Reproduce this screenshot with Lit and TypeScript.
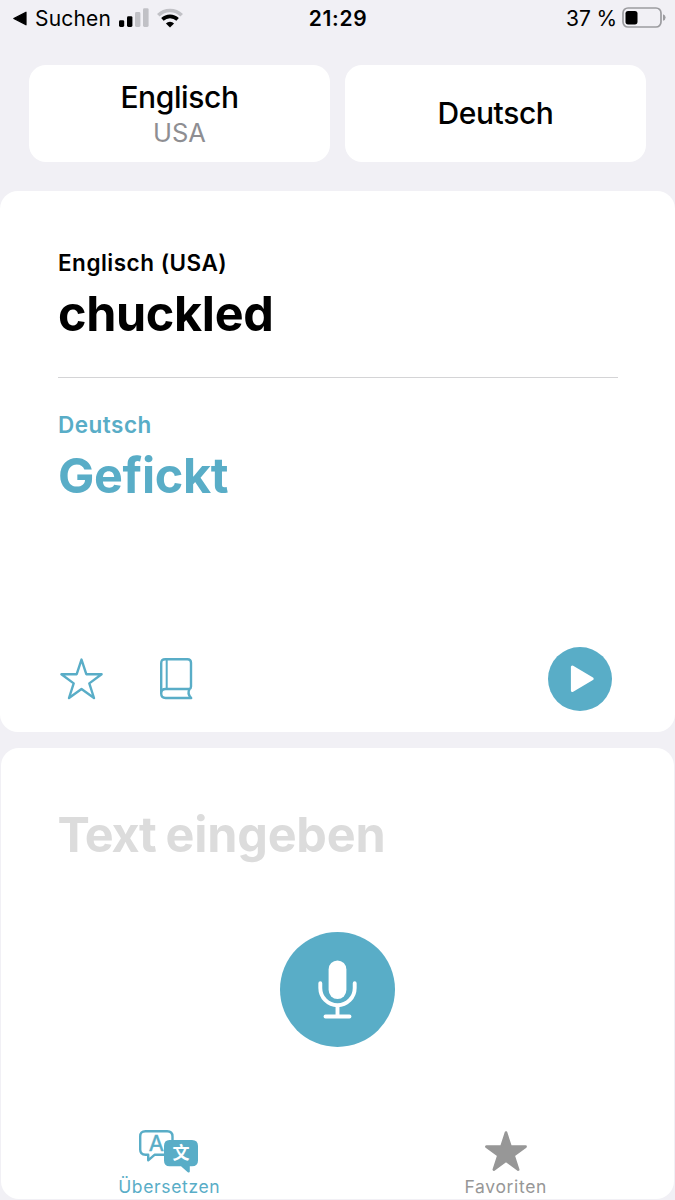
import { LitElement, html, css } from "lit";
import { customElement } from "lit/decorators.js";

@customElement("status-bar")
class StatusBar extends LitElement {
  static styles = css`
    :host {
      display: grid;
      grid-template-columns: 1fr auto 1fr;
      height: 37px;
      line-height: 37px;
      font-size: 21px;
      padding: 0 11px 0 12px;
      box-sizing: border-box;
    }
    svg { display: block; }
    .side { display: flex; align-items: center; }
    .end { justify-content: flex-end; margin-right: -2px; }
    .back { margin-right: 7px; }
    .app { letter-spacing: 0.2px; }
    .signal { margin: 0 8px 0 8px; }
    .time { font-weight: 600; letter-spacing: 0.7px; }
    .level { margin-right: 5px; letter-spacing: -0.1px; }
  `;
  render() {
    return html`
      <div class="side">
        <svg class="back" width="16" height="37" viewBox="0 0 16 37">
          <path d="M1.8 18.5 L14 12.2 V24.8 Z" stroke="#000" stroke-width="1.2" stroke-linejoin="round" />
        </svg>
        <span class="app">Suchen</span>
        <svg class="signal" width="30" height="37" viewBox="0 0 30 37">
          <rect x="0" y="20.2" width="5.2" height="6.8" rx="1.4" />
          <rect x="8" y="16.2" width="5.4" height="10.8" rx="1.4" />
          <rect x="16" y="12" width="5.4" height="15" rx="1.4" fill="#c1c1c6" />
          <rect x="24" y="8.2" width="5.6" height="18.8" rx="1.4" fill="#c1c1c6" />
        </svg>
        <svg width="26" height="37" viewBox="0 0 26 37" fill="none">
          <path d="M1.3 15.2 A16.8 16.8 0 0 1 24.7 15.2" stroke="#c1c1c6" stroke-width="3.6" />
          <path d="M5.4 19.4 A11 11 0 0 1 20.6 19.4" stroke="#000" stroke-width="3.6" />
          <path d="M13 27.6 L8.9 23.4 A5.8 5.8 0 0 1 17.1 23.4 Z" fill="#000" />
        </svg>
      </div>
      <span class="time">21:29</span>
      <div class="side end">
        <span class="level">37 %</span>
        <svg width="44" height="37" viewBox="0 0 44 37">
          <rect x="1" y="8" width="38" height="19" rx="5" fill="none" stroke="#9c9ca0" stroke-width="1.7" />
          <rect x="3.5" y="11" width="12" height="13.4" rx="2.6" />
          <path d="M41 14.2 Q43.6 15 43.6 17.5 Q43.6 20 41 20.8 Z" fill="#9c9ca0" />
        </svg>
      </div>
    `;
  }
}

@customElement("language-picker")
class LanguagePicker extends LitElement {
  static styles = css`
    :host {
      display: grid;
      grid-template-columns: 301px 301px;
      gap: 15px;
      padding: 28px 29px 29px;
    }
    .language {
      height: 97px;
      box-sizing: border-box;
      padding-bottom: 1px;
      border-radius: 17px;
      background: #fff;
      display: flex;
      flex-direction: column;
      align-items: center;
      justify-content: center;
    }
    .regional { padding: 3px 0 0; }
    .name { font-size: 30px; line-height: 36px; font-weight: 500; letter-spacing: -0.4px; }
    .region { font-size: 25.5px; line-height: 36px; color: #8e8e92; }
  `;
  render() {
    return html`
      <div class="language regional">
        <span class="name">Englisch</span>
        <span class="region">USA</span>
      </div>
      <div class="language"><span class="name">Deutsch</span></div>
    `;
  }
}

@customElement("translation-card")
class TranslationCard extends LitElement {
  static styles = css`
    :host {
      display: flex;
      flex-direction: column;
      height: 541px;
      box-sizing: border-box;
      padding: 58px 57px 21px 58px;
      border-radius: 18px;
      background: #fff;
    }
    svg { display: block; }
    .label { font-size: 22.5px; line-height: 28px; font-weight: 600; letter-spacing: 0.5px; }
    .phrase { margin-top: 7px; font-size: 48.5px; line-height: 60px; font-weight: 700; letter-spacing: -0.35px; }
    .source { border-bottom: 1px solid #d4d4d6; padding-bottom: 33px; margin-bottom: 33px; }
    .target { color: #59adc7; }
    .actions { margin-top: auto; display: flex; align-items: center; padding-right: 6px; }
    .book { margin-left: 54px; }
    .play { margin-left: auto; }
  `;
  render() {
    return html`
      <div class="source">
        <div class="label">Englisch (USA)</div>
        <div class="phrase">chuckled</div>
      </div>
      <div class="target">
        <div class="label">Deutsch</div>
        <div class="phrase">Gefickt</div>
      </div>
      <div class="actions">
        <svg width="47" height="46" viewBox="0 0 47 46" fill="none" stroke="#59adc7" stroke-width="2.4" stroke-linejoin="round">
          <path d="M23.5 3.6 L28.3 18.2 L43.6 18.3 L31.3 27.4 L36 42 L23.5 33.1 L11 42 L15.7 27.4 L3.4 18.3 L18.7 18.2 Z" />
        </svg>
        <svg class="book" width="36" height="46" viewBox="0 0 36 46" fill="none" stroke="#59adc7" stroke-width="2.4" stroke-linejoin="round" stroke-linecap="round">
          <path d="M30.6 33 Q32 32.4 32 30.6 V6.8 Q32 3.2 28.4 3.2 H6.2 Q2.2 3.2 2.2 7.2 V37.6 Q2.2 42 6.6 42 H32.2 Q27.8 37.6 30.6 33 H6.6 Q2.2 33 2.2 37.4" />
          <path d="M7.7 3.5 V33" stroke-width="2" />
        </svg>
        <svg class="play" width="64" height="64" viewBox="0 0 64 64">
          <circle cx="32" cy="32" r="32" fill="#59adc7" />
          <path d="M24.4 20.1 V43.5 L44.2 31.8 Z" fill="#fff" stroke="#fff" stroke-width="3" stroke-linejoin="round" />
        </svg>
      </div>
    `;
  }
}

@customElement("input-card")
class InputCard extends LitElement {
  static styles = css`
    :host {
      display: flex;
      flex-direction: column;
      height: 451px;
      box-sizing: border-box;
      margin: 16px 1px 1px;
      padding-top: 57px;
      border-radius: 18px;
      background: #fff;
    }
    svg { display: block; }
    .placeholder {
      padding-left: 56.5px;
      font-size: 48.5px;
      line-height: 60px;
      font-weight: 700;
      letter-spacing: -0.2px;
      color: #dcdcdc;
    }
    .tight { letter-spacing: -1.3px; }
    .mic { margin: 67px auto 0; }
    .tabs { margin-top: 81px; display: grid; grid-template-columns: 1fr 1fr; }
    .tab {
      display: flex;
      flex-direction: column;
      align-items: center;
      font-size: 17.5px;
      line-height: 22px;
      letter-spacing: 0.65px;
      color: #979797;
    }
    .active { color: #59adc7; }
    .glyph-latin { font: 400 22px Inter, sans-serif; letter-spacing: 0; }
    .glyph-han { font: 700 17px "Noto Sans CJK SC", sans-serif; letter-spacing: 0; }
  `;
  render() {
    return html`
      <div class="placeholder"><span class="tight">Text </span>eingeben</div>
      <svg class="mic" width="115" height="115" viewBox="0 0 115 115">
        <circle cx="57.5" cy="57.5" r="57.5" fill="#59adc7" />
        <rect x="48.6" y="28.5" width="17.8" height="38.5" rx="8.9" fill="#fff" />
        <path d="M40.3 51.2 V56 A17.2 17.2 0 0 0 74.7 56 V51.2 M57.5 74 V84.5 M45.5 84.5 H69.5"
          fill="none" stroke="#fff" stroke-width="3.9" stroke-linecap="round" />
      </svg>
      <div class="tabs">
        <div class="tab active">
          <svg width="60" height="48" viewBox="0 0 60 48">
            <path d="M33.5 12 V8.5 Q33.5 3.2 28.2 3.2 H6.5 Q1.2 3.2 1.2 8.5 V21.5 Q1.2 26.8 6.5 26.8 H9.2 V32.3 L15.5 26.8 H25"
              fill="none" stroke="#59adc7" stroke-width="2.4" stroke-linejoin="round" />
            <path d="M30.5 12 H53 Q59 12 59 18 V32.5 Q59 38.3 53 38.3 H50.8 V43.6 Q50.4 45.2 48.8 44.2 L42 38.3 H30.5 Q25 38.3 25 32.5 V18 Q25 12 30.5 12 Z"
              fill="#59adc7" />
            <text class="glyph-latin" x="17.3" y="22.8" text-anchor="middle" fill="#59adc7" stroke="#59adc7" stroke-width="0.4">A</text>
            <text class="glyph-han" x="42" y="31.2" text-anchor="middle" fill="#fff">文</text>
          </svg>
          <span>Übersetzen</span>
        </div>
        <div class="tab">
          <svg width="46" height="48" viewBox="0 0 46 48">
            <path d="M23 4.5 L27.6 18.6 L42.6 18.6 L30.6 27.4 L35.2 41.6 L23 32.8 L10.8 41.6 L15.4 27.4 L3.4 18.6 L18.4 18.6 Z"
              fill="#979797" stroke="#979797" stroke-width="2.6" stroke-linejoin="round" />
          </svg>
          <span>Favoriten</span>
        </div>
      </div>
    `;
  }
}

@customElement("app-root")
class AppRoot extends LitElement {
  static styles = css`
    :host {
      display: block;
      width: 675px;
      height: 1200px;
      overflow: hidden;
      background: #f1f0f5;
      color: #000;
      font-family: Inter, "Liberation Sans", sans-serif;
    }
  `;
  render() {
    return html`
      <status-bar></status-bar>
      <language-picker></language-picker>
      <translation-card></translation-card>
      <input-card></input-card>
    `;
  }
}
